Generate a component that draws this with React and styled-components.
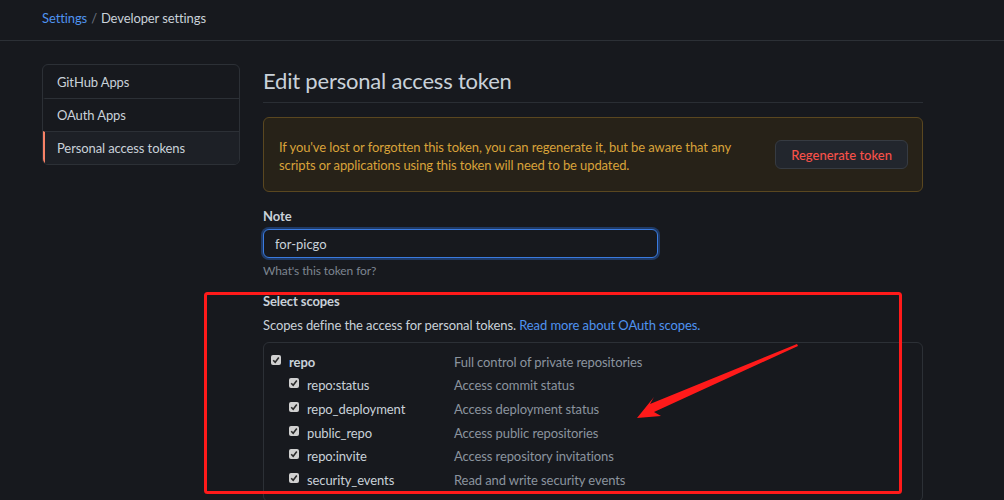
import React from "react";
import styled, { createGlobalStyle } from "styled-components";

const Global = createGlobalStyle`
  html, body { margin: 0; padding: 0; background: #17191e; }
  body {
    font-family: Lato, "Noto Sans", sans-serif;
    font-size: 13px;
    letter-spacing: -0.1px;
    color: #c9d1d9;
    width: 1004px;
    height: 500px;
    overflow: hidden;
  }
`;

const Page = styled.div`
  position: relative;
  width: 1004px;
  height: 500px;
  overflow: hidden;
`;

const Header = styled.header`
  height: 41px;
  border-bottom: 1px solid #2c3036;
  display: flex;
  align-items: center;
  padding: 0 42px 5px;
  box-sizing: border-box;
`;

const Crumb = styled.span`
  color: ${(p) => (p.$link ? "#4f93f0" : "#c9d1d9")};
`;

const Sep = styled.span`
  color: #6e7681;
  margin: 0 4px;
`;

const Layout = styled.div`
  display: flex;
  gap: 23px;
  padding: 23px 0 0 42px;
`;

const Side = styled.nav`
  width: 198px;
  flex: none;
  align-self: flex-start;
  border: 1px solid #2c3036;
  border-radius: 6px;
  overflow: hidden;
  box-sizing: border-box;
`;

const SideItem = styled.div`
  height: 33px;
  display: flex;
  align-items: center;
  padding-left: 12px;
  box-sizing: border-box;
  color: #c9d1d9;
  background: ${(p) => (p.$active ? "#1d2026" : "transparent")};
  border-left: 2px solid ${(p) => (p.$active ? "#f78166" : "transparent")};
  & + & {
    border-top: 1px solid #2c3036;
  }
`;

const Main = styled.main`
  width: 660px;
  flex: none;
`;

const Title = styled.h1`
  margin: 0;
  font-size: 22px;
  letter-spacing: -0.2px;
  font-weight: 400;
  line-height: 36px;
  padding-bottom: 3px;
  margin-top: -1px;
  border-bottom: 1px solid #2a2e34;
`;

const Flash = styled.div`
  margin-top: 14px;
  display: flex;
  align-items: center;
  justify-content: space-between;
  padding: 20px 14px 17px 15px;
  background: #272218;
  border: 1px solid #5a4720;
  border-radius: 6px;
  color: #d9a33a;
  line-height: 18px;
`;

const FlashText = styled.p`
  margin: 0;
  width: 460px;
`;

const Button = styled.button`
  font: inherit;
  color: #f85149;
  background: #22262d;
  border: 1px solid #363b42;
  border-radius: 6px;
  height: 29px;
  padding: 0 15px;
  font-weight: 500;
  margin-top: -3px;
`;

const Field = styled.div`
  margin-top: 14px;
`;

const Label = styled.div`
  font-weight: 700;
  line-height: 20px;
`;

const Input = styled.input`
  display: block;
  margin-top: 3px;
  width: 395px;
  height: 29px;
  box-sizing: border-box;
  background: #17191e;
  color: #c9d1d9;
  font: inherit;
  padding: 0 11px;
  border: 1px solid #3a7be0;
  border-radius: 6px;
  box-shadow: 0 0 0 2px #1f3a66;
  outline: none;
`;

const Hint = styled.div`
  margin-top: 5px;
  font-size: 12px;
  color: #7d8590;
`;

const Section = styled.section`
  margin-top: 13px;
`;

const Desc = styled.p`
  margin: 4px 0 0;
  line-height: 20px;
`;

const Link = styled.a`
  color: #4f93f0;
  text-decoration: none;
`;

const ScopeBox = styled.div`
  margin-top: 7px;
  border: 1px solid #2c3036;
  border-radius: 6px;
  padding-top: 7px;
`;

const ScopeRow = styled.div`
  display: flex;
  align-items: center;
  height: 23.6px;
  padding-left: ${(p) => (p.$sub ? 25 : 7)}px;
`;

const Check = styled.span`
  width: 10px;
  height: 10px;
  flex: none;
  background: #d0d0d0;
  border-radius: 2px;
  display: flex;
  align-items: center;
  justify-content: center;
  margin-right: 8px;
  margin-top: -4px;
`;

const ScopeName = styled.span`
  width: ${(p) => (p.$sub ? 147 : 165)}px;
  font-weight: ${(p) => (p.$bold ? 700 : 400)};
  color: #c9d1d9;
`;

const ScopeDesc = styled.span`
  color: #8b949e;
`;

const Divider = styled.div`
  border-top: 1px solid #2c3036;
  margin-top: 8px;
`;

const Overlay = styled.svg`
  position: absolute;
  left: 0;
  top: 0;
  pointer-events: none;
`;

const scopes = [
  ["repo:status", "Access commit status"],
  ["repo_deployment", "Access deployment status"],
  ["public_repo", "Access public repositories"],
  ["repo:invite", "Access repository invitations"],
  ["security_events", "Read and write security events"],
];

const Tick = () => (
  <svg width="8" height="8" viewBox="0 0 8 8">
    <path d="M1.2 4.2 L3.2 6.2 L6.8 1.6" stroke="#2a2a2a" strokeWidth="1.6" fill="none" />
  </svg>
);

export default function App() {
  return (
    <Page>
      <Global />
      <Header>
        <Crumb $link>Settings</Crumb>
        <Sep>/</Sep>
        <Crumb>Developer settings</Crumb>
      </Header>
      <Layout>
        <Side>
          <SideItem>GitHub Apps</SideItem>
          <SideItem>OAuth Apps</SideItem>
          <SideItem $active>Personal access tokens</SideItem>
        </Side>
        <Main>
          <Title>Edit personal access token</Title>
          <Flash>
            <FlashText>
              If you've lost or forgotten this token, you can regenerate it, but be aware that any
              scripts or applications using this token will need to be updated.
            </FlashText>
            <Button>Regenerate token</Button>
          </Flash>
          <Field>
            <Label>Note</Label>
            <Input defaultValue="for-picgo" />
            <Hint>What's this token for?</Hint>
          </Field>
          <Section>
            <Label>Select scopes</Label>
            <Desc>
              Scopes define the access for personal tokens.{" "}
              <Link>Read more about OAuth scopes.</Link>
            </Desc>
            <ScopeBox>
              <ScopeRow>
                <Check><Tick /></Check>
                <ScopeName $bold>repo</ScopeName>
                <ScopeDesc>Full control of private repositories</ScopeDesc>
              </ScopeRow>
              {scopes.map(([n, d]) => (
                <ScopeRow $sub key={n}>
                  <Check><Tick /></Check>
                  <ScopeName $sub>{n}</ScopeName>
                  <ScopeDesc>{d}</ScopeDesc>
                </ScopeRow>
              ))}
              <Divider />
            </ScopeBox>
          </Section>
        </Main>
      </Layout>
      <Overlay width="1004" height="500" viewBox="0 0 1004 500">
        <rect x="205.5" y="293.5" width="695" height="199" rx="2" fill="none" stroke="#ff1a1a" strokeWidth="3" />
        <path d="M797 344 L650 404 L654 397 L637 418 L661 416 L654 412 L798 346 Z" fill="#ff1a1a" />
      </Overlay>
    </Page>
  );
}
